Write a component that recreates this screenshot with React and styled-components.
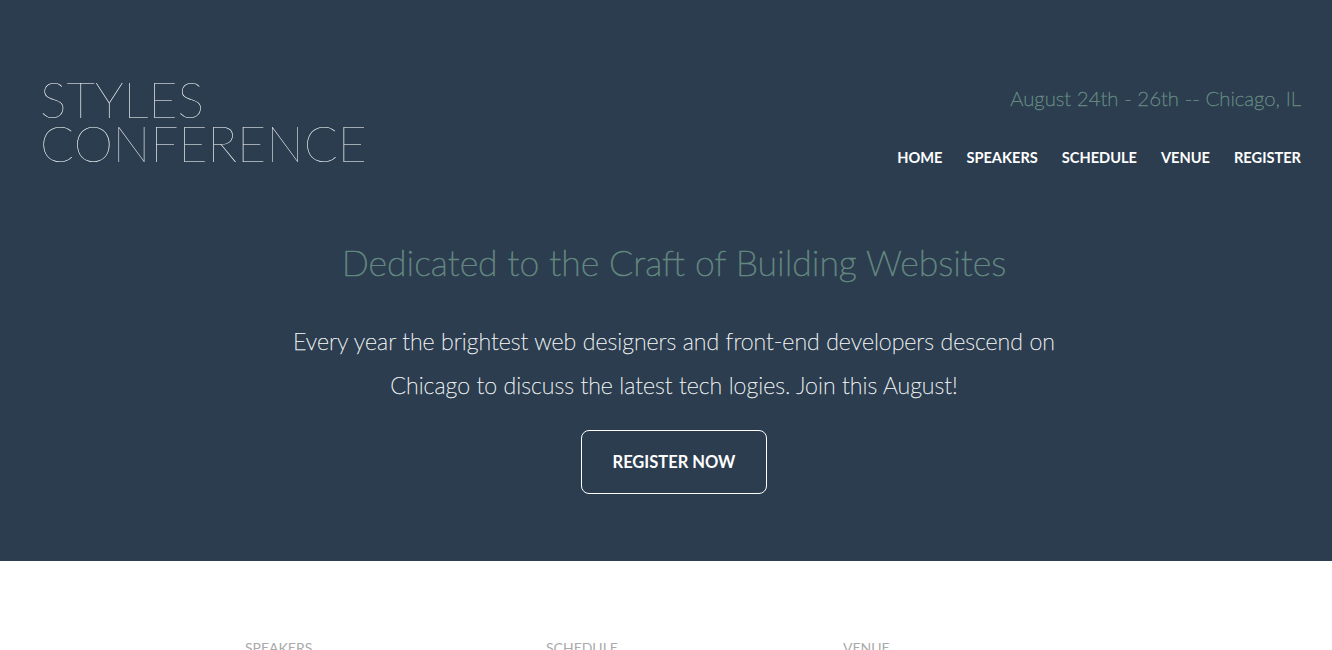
import React from "react";
import styled, { createGlobalStyle } from "styled-components";

const Global = createGlobalStyle`
  html, body { margin: 0; padding: 0; }
  body {
    font-family: "Lato Thin", Lato, "Open Sans", "Liberation Sans", sans-serif;
    font-weight: 300;
    background: #fff;
    color: #888;
  }
`;

const Hero = styled.section`
  background: #2b3d4f;
  height: 561px;
  box-sizing: border-box;
  padding: 77px 31px 0 40px;
`;

const HeaderRow = styled.header`
  display: flex;
  justify-content: space-between;
  align-items: flex-start;
`;

const Logo = styled.h1`
  margin: 0;
  font-family: "Lato Hairline", "Lato Thin", Lato, sans-serif;
  font-weight: 100;
  font-size: 50px;
  line-height: 44px;
  color: #fff;
  text-transform: uppercase;
`;

const RightCol = styled.div`
  display: flex;
  flex-direction: column;
  align-items: flex-end;
`;

const Tagline = styled.h3`
  margin: 7px 0 0;
  font-weight: 300;
  font-size: 20.4px;
  line-height: 28px;
  color: #648880;
  -webkit-text-stroke: 0.45px #648880;
`;

const Nav = styled.nav`
  display: flex;
  gap: 24px;
  margin-top: 35px;
`;

const NavLink = styled.a`
  color: #fff;
  font-family: Lato, sans-serif;
  font-weight: 700;
  font-size: 14.6px;
  line-height: 22px;
  text-transform: uppercase;
  text-decoration: none;
`;

const Intro = styled.div`
  display: flex;
  flex-direction: column;
  align-items: center;
  text-align: center;
  margin-top: 72px;
  padding-left: 7px;
`;

const Headline = styled.h2`
  margin: 0;
  font-weight: 300;
  font-size: 35.7px;
  line-height: 44px;
  color: #648880;
  -webkit-text-stroke: 0.6px #648880;
`;

const Lead = styled.p`
  margin: 34px 0 0;
  max-width: 800px;
  font-size: 23.2px;
  line-height: 44px;
  color: #fff;
  -webkit-text-stroke: 0.25px #fff;
`;

const Button = styled.a`
  margin-top: 23px;
  width: 186px;
  height: 64px;
  box-sizing: border-box;
  display: flex;
  align-items: center;
  justify-content: center;
  border: 1px solid #fff;
  border-radius: 8px;
  color: #fff;
  font-family: Lato, sans-serif;
  font-weight: 700;
  font-size: 16.5px;
  text-transform: uppercase;
  text-decoration: none;
`;

const Teasers = styled.section`
  display: grid;
  grid-template-columns: 301px 297px 300px;
  padding: 76px 0 0 245px;
`;

const TeaserTitle = styled.h5`
  margin: 0;
  font-family: Lato, sans-serif;
  font-weight: 400;
  font-size: 14px;
  line-height: 22px;
  color: #aaa;
  text-transform: uppercase;
`;

export default function App() {
  return (
    <>
      <Global />
      <Hero>
        <HeaderRow>
          <Logo>
            Styles
            <br />
            Conference
          </Logo>
          <RightCol>
            <Tagline>August 24th - 26th -- Chicago, IL</Tagline>
            <Nav>
              {["Home", "Speakers", "Schedule", "Venue", "Register"].map((n) => (
                <NavLink key={n} href="#">{n}</NavLink>
              ))}
            </Nav>
          </RightCol>
        </HeaderRow>
        <Intro>
          <Headline>Dedicated to the Craft of Building Websites</Headline>
          <Lead>
            Every year the brightest web designers and front-end developers descend on
            Chicago to discuss the latest tech logies. Join this August!
          </Lead>
          <Button href="#">Register Now</Button>
        </Intro>
      </Hero>
      <Teasers>
        <TeaserTitle>Speakers</TeaserTitle>
        <TeaserTitle>Schedule</TeaserTitle>
        <TeaserTitle>Venue</TeaserTitle>
      </Teasers>
    </>
  );
}
